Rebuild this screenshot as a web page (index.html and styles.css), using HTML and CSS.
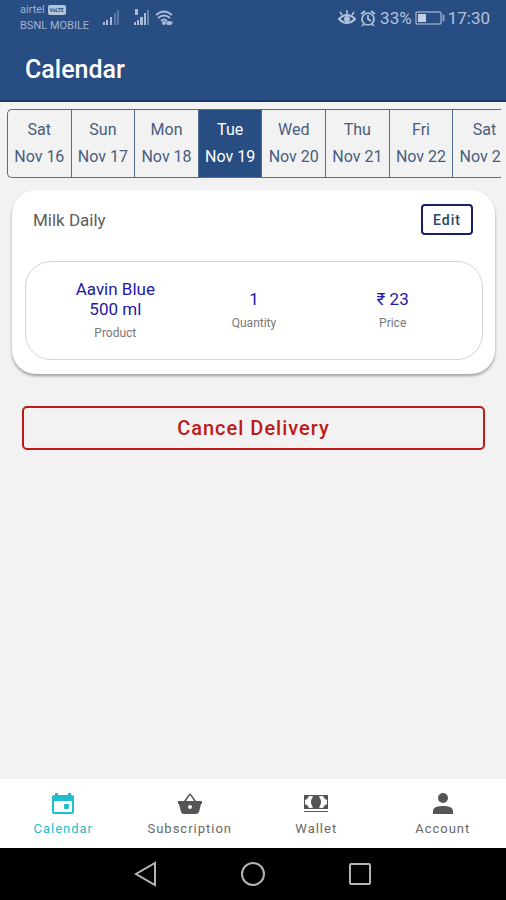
FILE: index.html
```
<!DOCTYPE html>
<html lang="en">
  <head>
    <meta charset="UTF-8" />
    <meta name="viewport" content="width=device-width, initial-scale=1" />
    <title>Calendar</title>
    <link rel="stylesheet" href="styles.css">
  </head>
  <body>
    <header class="app-header">
      <div class="status-bar">
        <div class="carriers">
          <div class="carrier">airtel <span class="volte">VoLTE</span></div>
          <div class="carrier">BSNL MOBILE</div>
        </div>
        <svg class="signal-icons" width="72" height="20" viewBox="0 0 72 20" aria-hidden="true">
          <g fill="#a9bbd8">
            <path d="M1 15h2v3H1zM4 13h2v5H4zM8 10h2v8H8z" />
            <path d="M12 6h2v12h-2zM15 3h2v15h-2z" opacity=".4" />
            <path d="M32 15h2v3h-2zM35 13h2v5h-2zM38 10h3v8h-3zM42 6h2v12h-2z" />
            <path d="M45 3h2v15h-2z" opacity=".5" />
            <path d="M33 2h3v6h-3z" />
            <circle cx="62" cy="16" r="2" />
            <path d="M64 15l3-1 4 1-2 3h-4z" />
          </g>
          <g fill="none" stroke="#a9bbd8" stroke-width="2">
            <path d="M54 8q8-7 16 0" />
            <path d="M56 11q6-5 12 0" />
            <path d="M59 14q3-3 6 0" />
          </g>
        </svg>
        <div class="status-right">
          <svg width="18" height="18" viewBox="0 0 18 18" fill="none" stroke="#b4c3dc" stroke-width="2" aria-hidden="true">
            <path d="M1 10q8-8 16 0-8 8-16 0z" />
            <path d="M9 5V1M4 6L2 3M14 6l2-3" stroke-width="1.5" />
            <circle cx="9" cy="10" r="2" fill="#b4c3dc" />
          </svg>
          <svg class="alarm" width="18" height="18" viewBox="0 0 18 18" fill="none" stroke="#b4c3dc" stroke-width="1.7" aria-hidden="true">
            <circle cx="9" cy="10" r="6" />
            <path d="M9 6v4l3 2M2 5l4-3M16 5l-4-3M5 15l-2 2M13 15l2 2" />
          </svg>
          <span>33%</span>
          <svg class="battery" width="30" height="16" viewBox="0 0 30 16" aria-hidden="true">
            <rect x="1" y="2" width="25" height="12" rx="1" fill="none" stroke="#8aa2c8" stroke-width="1.5" />
            <path d="M3 4h8v8H3z" fill="#c3d0e4" />
            <path d="M28 5h1v6h-1z" fill="#8aa2c8" stroke="#8aa2c8" />
          </svg>
          <span>17:30</span>
        </div>
      </div>
      <h1 class="title">Calendar</h1>
    </header>

    <main class="content">
      <div class="days" role="group" aria-label="Delivery day">
        <button class="day" type="button"><span>Sat</span><span>Nov 16</span></button>
        <button class="day" type="button"><span>Sun</span><span>Nov 17</span></button>
        <button class="day" type="button"><span>Mon</span><span>Nov 18</span></button>
        <button class="day active" type="button" aria-pressed="true"><span>Tue</span><span>Nov 19</span></button>
        <button class="day" type="button"><span>Wed</span><span>Nov 20</span></button>
        <button class="day" type="button"><span>Thu</span><span>Nov 21</span></button>
        <button class="day" type="button"><span>Fri</span><span>Nov 22</span></button>
        <button class="day" type="button"><span>Sat</span><span>Nov 23</span></button>
      </div>

      <section class="card">
        <div class="card-head">
          <h2 class="card-title">Milk Daily</h2>
          <button class="edit-btn" type="button">Edit</button>
        </div>
        <div class="order">
          <div class="field">
            <span class="value">Aavin Blue<br>500 ml</span>
            <span class="label">Product</span>
          </div>
          <div class="field">
            <span class="value">1</span>
            <span class="label">Quantity</span>
          </div>
          <div class="field">
            <span class="value">₹ 23</span>
            <span class="label">Price</span>
          </div>
        </div>
      </section>

      <button class="cancel-btn" type="button">Cancel Delivery</button>
    </main>

    <nav class="tabs" aria-label="Main">
      <a class="tab active" href="#calendar" aria-current="page">
        <svg width="28" height="24" viewBox="0 0 28 24" fill="currentColor" aria-hidden="true">
          <path fill-rule="evenodd" d="M6 1h3v2h10V1h3v2h1q2 0 2 2v15q0 2-2 2H5q-2 0-2-2V5q0-2 2-2h1zM5 9v11h18V9z" />
          <rect x="15" y="12" width="5" height="5" rx="1" />
        </svg>
        Calendar
      </a>
      <a class="tab" href="#subscription">
        <svg width="28" height="24" viewBox="0 0 28 24" fill="currentColor" aria-hidden="true">
          <path fill-rule="evenodd" d="M2 9h6l5-7q1-1 2 0l5 7h6v3h-1l-2 8q-1 2-3 2H8q-2 0-3-2l-2-8H2zM10 9h8l-4-6zM14 13a2 2 0 1 0 0 4 2 2 0 0 0 0-4z" />
        </svg>
        Subscription
      </a>
      <a class="tab" href="#wallet">
        <svg width="28" height="24" viewBox="0 0 28 24" fill="currentColor" aria-hidden="true">
          <path fill-rule="evenodd" d="M2 3h24v14H2zM9 4H7q-1 3-4 4v4q3 1 4 4h2q2 0 2-1-3-5 0-10 0-1-2-1zM19 4q-2 0-2 1 3 5 0 10 0 1 2 1h2q1-3 4-4V8q-3-1-4-4z" />
          <ellipse cx="14" cy="10" rx="5" ry="6" />
          <path d="M2 19h24v1H2z" />
        </svg>
        Wallet
      </a>
      <a class="tab" href="#account">
        <svg width="28" height="24" viewBox="0 0 28 24" fill="currentColor" aria-hidden="true">
          <circle cx="14" cy="6" r="5" />
          <path d="M4 22v-3q0-5 10-5t10 5v3z" />
        </svg>
        Account
      </a>
    </nav>

    <div class="system-nav">
      <button class="sys-btn" type="button" aria-label="Back">
        <svg width="24" height="26" viewBox="0 0 24 26" aria-hidden="true"><path d="M21 2v22L2 13z" /></svg>
      </button>
      <button class="sys-btn" type="button" aria-label="Home">
        <svg width="26" height="26" viewBox="0 0 26 26" aria-hidden="true"><circle cx="13" cy="13" r="11" /></svg>
      </button>
      <button class="sys-btn" type="button" aria-label="Recent apps">
        <svg width="24" height="26" viewBox="0 0 24 26" aria-hidden="true"><rect x="2" y="3" width="20" height="20" rx="1" /></svg>
      </button>
    </div>
  </body>
</html>
```
FILE: styles.css
```
:root {
  --blue: #284d82;
  --navy: #17366c;
  --ink-blue: #2318a8;
  --red: #bd1b17;
  --teal: #20becd;
  --grey: #686868;
  --bg: #f2f2f2;
}
* {
  box-sizing: border-box;
}
body {
  margin: 0;
  min-height: 100vh;
  display: flex;
  flex-direction: column;
  background: var(--bg);
  font-family: Roboto, "Liberation Sans", sans-serif;
}
button {
  font-family: inherit;
  cursor: pointer;
}
h1,
h2 {
  margin: 0;
}

/* Header */
.app-header {
  background: var(--blue);
  border-bottom: 2px solid var(--navy);
  color: #fff;
}
.status-bar {
  display: flex;
  align-items: flex-start;
  height: 36px;
  padding: 2px 16px 0 20px;
  color: #b4c3dc;
}
.carriers {
  width: 82px;
}
.carrier {
  font-size: 11px;
  line-height: 16px;
  color: #9fb2d1;
  white-space: nowrap;
}
.volte {
  display: inline-block;
  padding: 0 2px;
  border-radius: 2px;
  background: #b4c3dc;
  color: var(--blue);
  font-size: 5px;
  font-weight: 700;
  line-height: 10px;
  vertical-align: 1px;
}
.signal-icons {
  margin-top: 5px;
}
.status-right {
  display: flex;
  align-items: center;
  gap: 3px;
  margin-left: auto;
  padding-top: 6px;
  font-size: 17px;
  line-height: 20px;
}
.title {
  padding: 18px 25px 14px;
  font-size: 25px;
  line-height: 32px;
  font-weight: 500;
}

/* Day picker */
.content {
  flex: 1;
}
.days {
  display: flex;
  margin: 7px 5px 0 7px;
  border: 1px solid #536d92;
  border-right: none;
  border-radius: 5px 0 0 5px;
  overflow: hidden;
}
.day {
  flex: 0 0 13%;
  display: flex;
  flex-direction: column;
  align-items: center;
  padding: 6px 0 7px;
  border: none;
  border-right: 1px solid #536d92;
  background: transparent;
  color: #485d80;
  font-size: 16px;
  line-height: 27px;
  white-space: nowrap;
}
/* about 7.75 days fit across the strip */
.days .day {
  flex-basis: calc(100% / 7.75);
}
.day.active {
  background: var(--blue);
  color: #fff;
}

/* Order card */
.card {
  margin: 12px 11px 0 12px;
  padding: 14px 12px 14px 13px;
  border-radius: 24px;
  background: #fff;
  box-shadow: 0 2px 3px rgb(0 0 0 / 0.35);
}
.card-head {
  display: flex;
  justify-content: space-between;
  align-items: center;
  padding: 0 10px 0 8px;
  margin-bottom: 26px;
}
.card-title {
  font-size: 17px;
  font-weight: 400;
  color: #5c5c5c;
}
.edit-btn {
  height: 31px;
  padding: 0 10px;
  border: 2px solid #171f68;
  border-radius: 4px;
  background: transparent;
  color: #264668;
  font-size: 14px;
  font-weight: 500;
  letter-spacing: 1px;
}
.order {
  display: grid;
  grid-template-columns: repeat(3, 1fr);
  align-items: center;
  min-height: 99px;
  padding: 0 20px 2px;
  border: 1px solid #d4d4d4;
  border-radius: 26px;
}
.field {
  display: flex;
  flex-direction: column;
  align-items: center;
  gap: 6px;
  text-align: center;
}
.value {
  font-size: 17px;
  line-height: 20px;
  color: var(--ink-blue);
}
.label {
  font-size: 12px;
  line-height: 16px;
  color: #777;
}
.cancel-btn {
  display: block;
  width: calc(100% - 43px);
  height: 44px;
  margin: 32px 21px 0 22px;
  border: 2px solid var(--red);
  border-radius: 5px;
  background: transparent;
  color: var(--red);
  font-size: 20px;
  font-weight: 500;
  letter-spacing: 1px;
}

/* Bottom tabs */
.tabs {
  display: grid;
  grid-template-columns: repeat(4, 1fr);
  background: #fff;
}
.tab {
  display: flex;
  flex-direction: column;
  align-items: center;
  gap: 3px;
  padding: 13px 0 9px;
  color: var(--grey);
  font-size: 13px;
  line-height: 20px;
  letter-spacing: 1px;
  text-decoration: none;
}
.tab svg {
  color: #555;
}
.tab.active,
.tab.active svg {
  color: var(--teal);
}

/* Android navigation keys */
.system-nav {
  display: flex;
  justify-content: center;
  align-items: center;
  gap: 82px;
  height: 52px;
  background: #000;
}
.sys-btn {
  display: flex;
  padding: 0;
  border: none;
  background: none;
}
.sys-btn svg {
  fill: none;
  stroke: #b5b5b5;
  stroke-width: 2;
}
```
